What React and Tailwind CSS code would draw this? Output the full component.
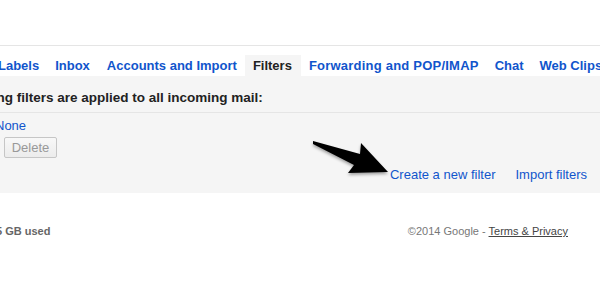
const tabs = [
  { label: 'Labels', extra: 'px-2' },
  { label: 'Inbox', extra: 'px-2' },
  { label: 'Accounts and Import', extra: 'pl-[9px] pr-2' },
  { label: 'Filters', extra: 'pl-2 pr-[9px]', active: true },
  { label: 'Forwarding and POP/IMAP', extra: 'px-2 tracking-[0.22px]' },
  { label: 'Chat', extra: 'px-2' },
  { label: 'Web Clips', extra: 'px-2' },
  { label: 'Labs', extra: 'px-2' },
];

const Arrow = () => (
  <svg
    className="absolute left-[300px] top-[130px]"
    width="100"
    height="50"
    viewBox="0 0 100 50"
  >
    <defs>
      <filter id="sh" x="-20%" y="-20%" width="140%" height="150%">
        <feDropShadow dx="0" dy="2" stdDeviation="1.5" floodColor="#000" floodOpacity="0.35" />
      </filter>
    </defs>
    <polygon
      points="13,11 60,24 61,13 88,42 48,43 54,35 13,14"
      fill="#000"
      filter="url(#sh)"
    />
  </svg>
);

export default function App() {
  return (
    <div className="relative w-[600px] h-[300px] overflow-hidden bg-white font-['Liberation_Sans',Arial,sans-serif]">
      <div className="h-[45px]" />
      <div className="h-px bg-[#e5e5e5]" />

      {/* Tabs */}
      <div className="flex ml-[-10px] pt-[9px] whitespace-nowrap">
        {tabs.map(t => (
          <div
            key={t.label}
            className={
              (t.active
                ? 'shrink-0 h-[21px] pt-px leading-[20px] text-[13px] font-bold text-[#222] bg-[#f5f5f5] '
                : 'shrink-0 h-[21px] pt-px leading-[20px] text-[13px] font-bold text-[#15c] ') + t.extra
            }
          >
            {t.label}
          </div>
        ))}
      </div>

      {/* Filters panel */}
      <div className="h-[117px] bg-[#f5f5f5]">
        <div className="h-[37px] pt-[13px] border-b border-[#e5e5e5] whitespace-nowrap">
          <div className="ml-[-74px] leading-[18px] text-[13.5px] font-bold text-[#222]">
            The following filters are applied to all incoming mail:
          </div>
        </div>
        <div className="mt-[4px] ml-[-5px] leading-[18px] text-[13px] text-[#15c]">None</div>
        <div className="mt-[2px] ml-[4px] w-[53px] h-[21px] flex items-center justify-center rounded-[2px] border border-[#c6c6c6] bg-gradient-to-b from-[#f8f8f8] to-[#ececec] text-[13px] text-[#999]">
          Delete
        </div>
        <div className="mt-[8px] flex justify-end gap-[20px] pr-[13px] leading-[18px] text-[13px] text-[#15c]">
          <span>Create a new filter</span>
          <span>Import filters</span>
        </div>
      </div>

      {/* Footer */}
      <div className="mt-[29px] flex justify-between leading-[18px] text-[11px]">
        <div className="ml-[-4px] font-bold text-[#666]">5 GB used</div>
        <div className="pr-[32px] text-[#777]">
          ©2014 Google - <span className="underline text-[#444]">Terms &amp; Privacy</span>
        </div>
      </div>

      <Arrow />
    </div>
  );
}
